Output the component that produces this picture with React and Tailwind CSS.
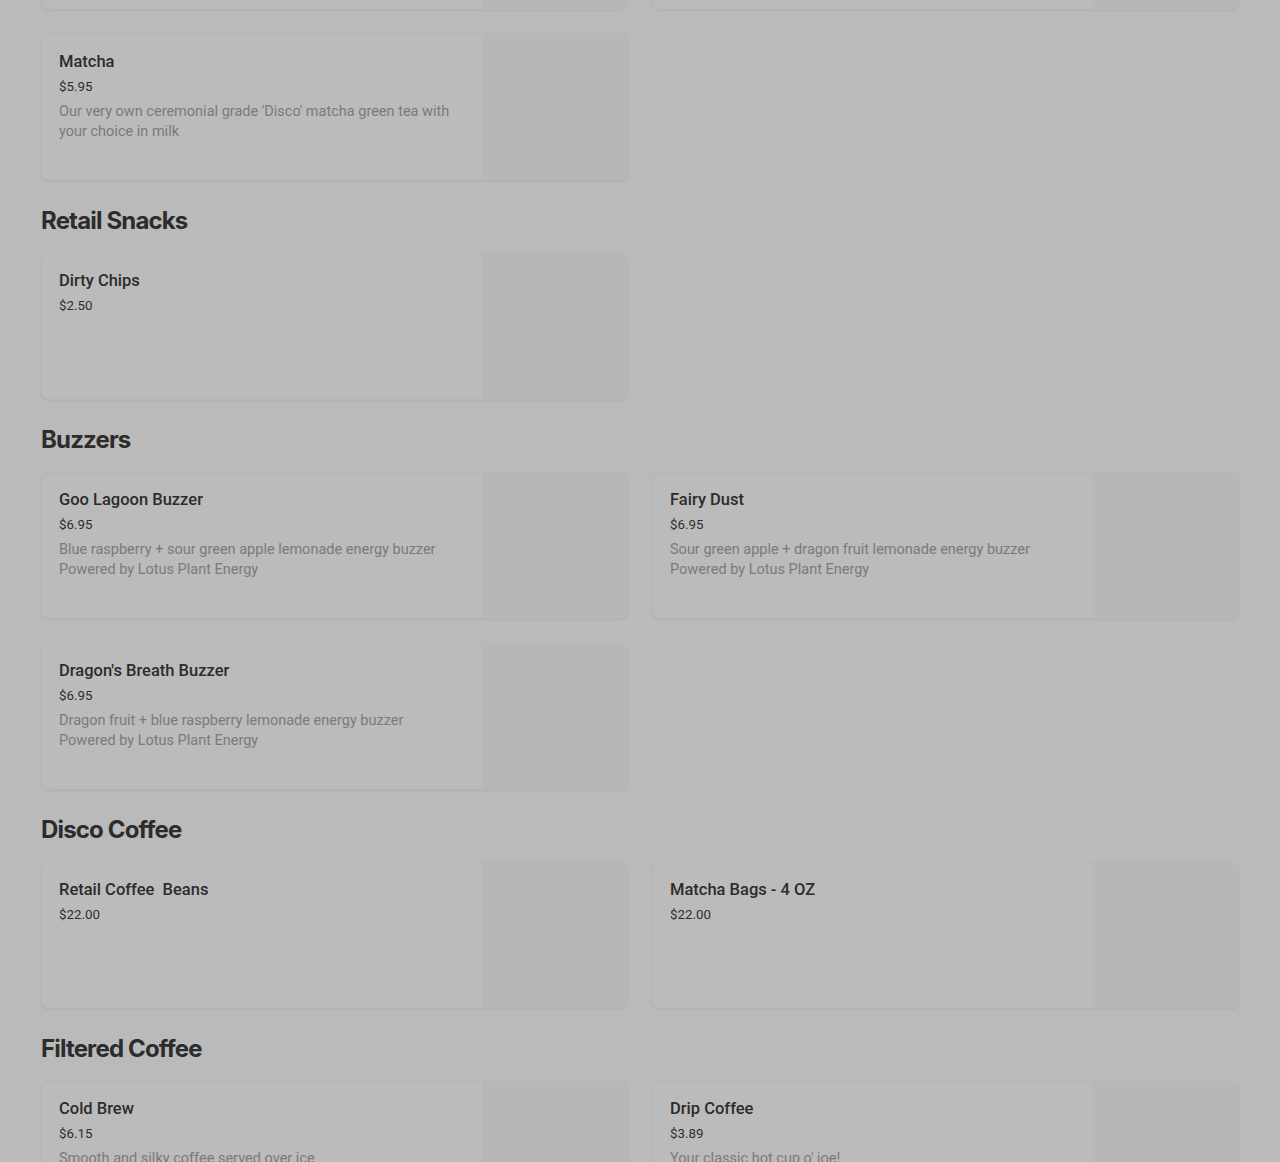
import React from 'react';

const sections = [
  {
    title: null,
    items: [
      { name: 'Latte', price: '$5.45', desc: 'Espresso with steamed milk' },
      { name: 'Chai Latte', price: '$5.75', desc: 'Spiced black tea with steamed milk' },
      {
        name: 'Matcha',
        price: '$5.95',
        desc: "Our very own ceremonial grade 'Disco' matcha green tea with your choice in milk",
      },
    ],
  },
  {
    title: 'Retail Snacks',
    items: [{ name: 'Dirty Chips', price: '$2.50' }],
  },
  {
    title: 'Buzzers',
    items: [
      {
        name: 'Goo Lagoon Buzzer',
        price: '$6.95',
        desc: ['Blue raspberry + sour green apple lemonade energy buzzer', 'Powered by Lotus Plant Energy'],
      },
      {
        name: 'Fairy Dust',
        price: '$6.95',
        desc: ['Sour green apple + dragon fruit lemonade energy buzzer', 'Powered by Lotus Plant Energy'],
      },
      {
        name: "Dragon's Breath Buzzer",
        price: '$6.95',
        desc: ['Dragon fruit + blue raspberry lemonade energy buzzer', 'Powered by Lotus Plant Energy'],
      },
    ],
  },
  {
    title: 'Disco Coffee',
    items: [
      { name: 'Retail Coffee\u00a0 Beans', price: '$22.00' },
      { name: 'Matcha Bags - 4 OZ', price: '$22.00' },
    ],
  },
  {
    title: 'Filtered Coffee',
    items: [
      { name: 'Cold Brew', price: '$6.15', desc: 'Smooth and silky coffee served over ice' },
      { name: 'Drip Coffee', price: '$3.89', desc: "Your classic hot cup o' joe!" },
    ],
  },
];

function MenuCard({ item }) {
  const lines = Array.isArray(item.desc) ? item.desc : item.desc ? [item.desc] : [];
  return (
    <div className="flex h-[147px] overflow-hidden rounded-lg border border-[#b5b5b5] bg-[#bbbbbb] shadow-[0_1px_2px_rgba(0,0,0,0.05)]">
      <div className="flex-1 min-w-0 pl-[17px] pr-4 pt-[17px]">
        <div className="text-[16.5px] leading-5 font-medium text-[#2c2c2c]">{item.name}</div>
        <div className="mt-[5px] text-[13.3px] leading-5 text-[#2e2e2e]">{item.price}</div>
        {lines.length > 0 && (
          <div className="mt-[5px] text-[14.5px] leading-5 text-[#7a7a7a]">
            {lines.map((l, i) => (
              <div key={i}>{l}</div>
            ))}
          </div>
        )}
      </div>
      {/* image placeholder */}
      <div className="w-[145px] shrink-0 bg-[#b7b7b7]" />
    </div>
  );
}

export default function App() {
  return (
    <div
      className="h-[1162px] w-full overflow-hidden bg-[#bababa]"
      style={{ fontFamily: 'Roboto, "Liberation Sans", sans-serif' }}
    >
      <div className="-mt-[137px] px-[41px]">
        {sections.map((s, i) => (
          <section key={i}>
            {s.title && (
              <h2
                className="mt-6 mb-4 h-8 text-[24px] leading-8 font-bold tracking-[-0.035em] text-[#2c2c2c]"
                style={{ fontFamily: 'Inter, "Liberation Sans", sans-serif' }}
              >
                {s.title}
              </h2>
            )}
            <div className="grid grid-cols-2 gap-x-6 gap-y-6">
              {s.items.map((item) => (
                <MenuCard key={item.name} item={item} />
              ))}
            </div>
          </section>
        ))}
      </div>
    </div>
  );
}
